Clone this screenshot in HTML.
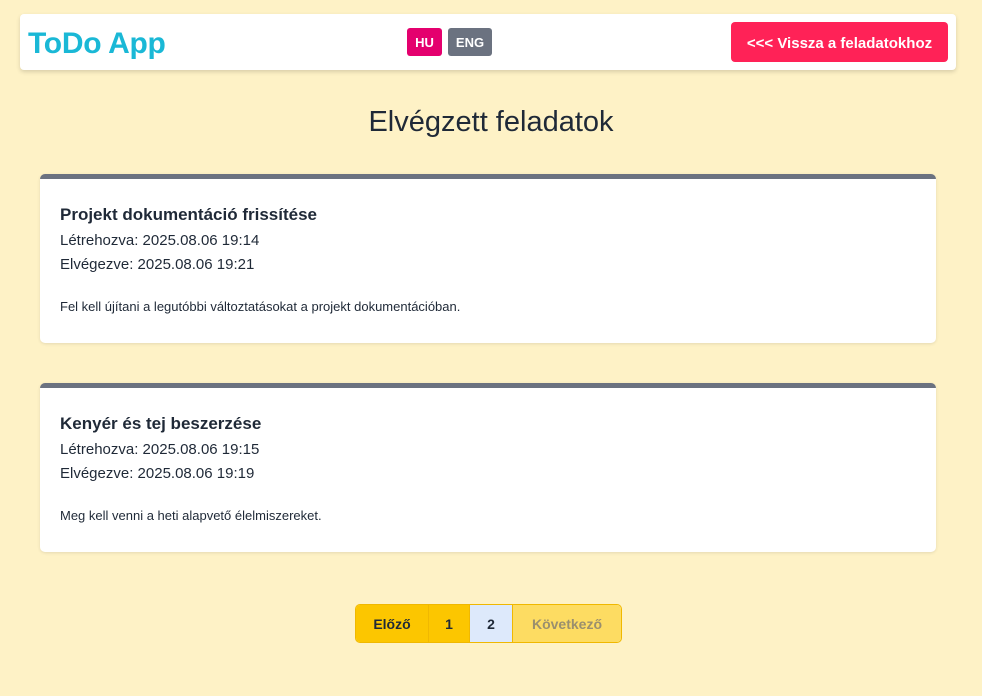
<!DOCTYPE html>
<html><head><meta charset="utf-8"><style>
*{box-sizing:border-box;margin:0;padding:0}
body{width:982px;height:696px;background:#fef2c6;font-family:"Liberation Sans",sans-serif;color:#1f2937;position:relative;overflow:hidden}
.nav{position:absolute;left:20px;top:14px;width:936px;height:56px;background:#fff;border-radius:4px;box-shadow:0 2px 4px rgba(0,0,0,.15)}
.logo{position:absolute;left:8px;top:13px;font-size:30px;font-weight:bold;color:#1ab8d6;letter-spacing:-0.3px}
.lang{position:absolute;top:14px;height:28px;color:#fff;font-size:13px;font-weight:bold;border-radius:3px;line-height:29px;text-align:center}
.back{position:absolute;right:8px;top:8px;width:217px;height:40px;background:#ff2257;color:#fff;border-radius:4px;font-size:15px;font-weight:bold;line-height:43px;text-align:center}
h1{position:absolute;top:106px;width:100%;text-align:center;font-size:29px;font-weight:normal;color:#1f2937}
.card{position:absolute;left:40px;width:896px;height:169px;background:#fff;border-top:5px solid #6b7280;border-radius:5px;box-shadow:0 1px 3px rgba(0,0,0,.1);padding:0 20px}
.card h3{font-size:17px;font-weight:bold;margin-top:26px;margin-bottom:4px}
.card .d{font-size:15px;line-height:24px}
.card p{font-size:13px;margin-top:22px}
.pg{position:absolute;left:355px;top:604px;height:39px;display:flex;border:1px solid #f0b800;border-radius:5px;overflow:hidden;font-size:14px;font-weight:bold}
.pg div{line-height:39px;text-align:center;border-right:1px solid #f0b800}
</style></head><body>
<div class="nav">
<div class="logo">ToDo App</div>
<div class="lang" style="left:387px;width:35px;background:#e4006e">HU</div>
<div class="lang" style="left:428px;width:44px;background:#6b7280">ENG</div>
<div class="back">&lt;&lt;&lt; Vissza a feladatokhoz</div>
</div>
<h1>Elvégzett feladatok</h1>
<div class="card" style="top:174px">
<h3>Projekt dokumentáció frissítése</h3>
<div class="d">Létrehozva: 2025.08.06 19:14</div>
<div class="d">Elvégezve: 2025.08.06 19:21</div>
<p>Fel kell újítani a legutóbbi változtatásokat a projekt dokumentációban.</p>
</div>
<div class="card" style="top:383px">
<h3>Kenyér és tej beszerzése</h3>
<div class="d">Létrehozva: 2025.08.06 19:15</div>
<div class="d">Elvégezve: 2025.08.06 19:19</div>
<p>Meg kell venni a heti alapvető élelmiszereket.</p>
</div>
<div class="pg">
<div style="width:73px;background:#fcc600">Előző</div>
<div style="width:41px;background:#fcc600">1</div>
<div style="width:43px;background:#dde9fb">2</div>
<div style="width:108px;background:#fddc62;color:#9a8f6e;border-right:none">Következő</div>
</div>
</body></html>
